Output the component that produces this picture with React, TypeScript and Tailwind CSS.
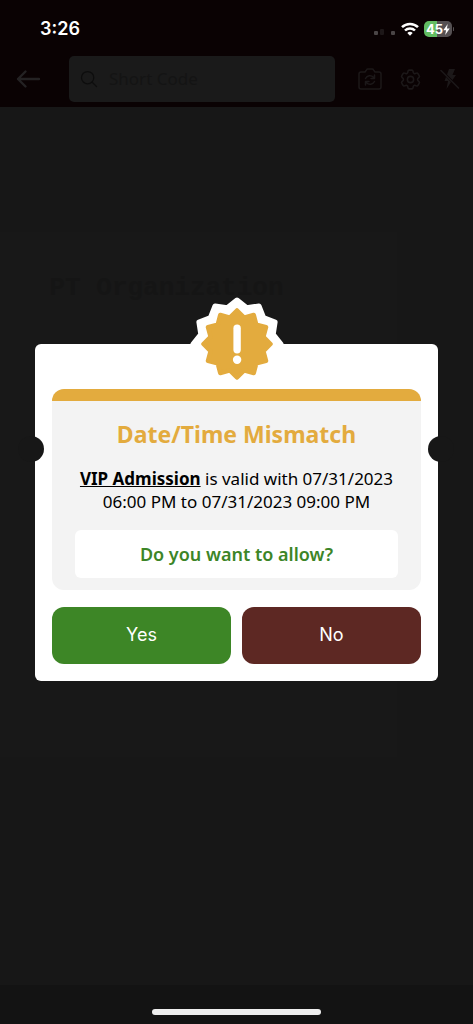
import React from "react";
import { IoSearchOutline } from "react-icons/io5";
import { HiOutlineCog6Tooth } from "react-icons/hi2";

function burstPoints(outer: number, inner: number, tips: number): string {
  const points: string[] = [];
  for (let i = 0; i < tips * 2; i++) {
    const radius = i % 2 === 0 ? outer : inner;
    const angle = (Math.PI * i) / tips;
    points.push(
      `${(50 + radius * Math.sin(angle)).toFixed(2)},${(50 - radius * Math.cos(angle)).toFixed(2)}`,
    );
  }
  return points.join(" ");
}

function WarningBadge() {
  return (
    <svg viewBox="0 0 100 100" className="size-[100px]" role="img" aria-label="Warning">
      <polygon points={burstPoints(44, 37.5, 12)} fill="#fff" stroke="#fff" strokeWidth="5" strokeLinejoin="round" />
      <polygon points={burstPoints(33.5, 27.3, 12)} fill="#e3ab3e" stroke="#e3ab3e" strokeWidth="4.5" strokeLinejoin="round" />
      <rect x="46.4" y="30.5" width="7.4" height="29" rx="3.7" fill="#fff" />
      <circle cx="50.1" cy="65.8" r="4.2" fill="#fff" />
    </svg>
  );
}

function StatusBar() {
  return (
    <div className="flex h-14 items-center justify-between pt-[2px] pr-[19px] pl-10 text-white">
      <time className="font-['Inter',sans-serif] text-lg leading-6 font-semibold">3:26</time>
      <div className="flex items-center gap-[5px]">
        <svg viewBox="0 0 22 14" className="h-[14px] w-[22px]" aria-hidden="true">
          <rect x="0" y="9" width="4" height="4" rx="1" fill="#4a4546" />
          <rect x="6" y="7" width="4" height="6" rx="1" fill="#1d1718" />
          <rect x="17" y="9" width="4" height="4" rx="1" fill="#4a4546" />
        </svg>
        <svg viewBox="0 0 18 14" className="h-[14px] w-[18px]" aria-hidden="true" fill="none" stroke="#fff" strokeWidth="2.5">
          <path d="M1 5.2a11.3 11.3 0 0 1 16 0" />
          <path d="M4 8.5a7 7 0 0 1 10 0" />
          <path d="M9 13.8 6.3 11a3.9 3.9 0 0 1 5.4 0Z" fill="#fff" stroke="none" />
        </svg>
        <div className="flex items-center gap-px">
          <div className="flex h-4 w-7 items-center justify-center overflow-hidden rounded-[5px] bg-linear-to-r from-[#62bd62] from-45% to-[#555052] to-45% font-['Inter',sans-serif] text-[13px] leading-4 font-bold">
            45
            <svg viewBox="0 0 7 12" className="h-[11px] w-[7px]" aria-hidden="true">
              <path d="M4.8 0 0 6.8h3L2.1 12 7 5H4Z" fill="#fff" />
            </svg>
          </div>
          <span className="h-1 w-px rounded-full bg-[#555052]" />
        </div>
      </div>
    </div>
  );
}

function CameraSwitchIcon() {
  return (
    <svg viewBox="0 0 24 22" className="h-[22px] w-6" fill="none" stroke="currentColor" strokeWidth="1.5" strokeLinecap="round" strokeLinejoin="round">
      <path d="M3 4h4l1.500-2.200Q8.900 1 9.800 1h4.400q.900 0 1.300.8L17 4h4q2 0 2 2v13q0 2-2 2H3q-2 0-2-2V6q0-2 2-2Z" />
      <path d="M7.500 10.500a5 5 0 0 1 8-1.200l1 1M16.500 7v3.400H13M16.500 13.500a5 5 0 0 1-8 1.200l-1-1M7.500 17v-3.400H11" />
    </svg>
  );
}

function FlashOffIcon() {
  return (
    <svg viewBox="0 0 22 22" className="size-[22px]" fill="currentColor">
      <path d="M10 1h6l-2.500 6H17l-3.500 5L8 6.500ZM7 9l5 5-4.500 7L9 13H5.500Z" />
      <path d="M2 2.500 19.500 20" fill="none" stroke="currentColor" strokeWidth="1.6" strokeLinecap="round" />
    </svg>
  );
}

function Header() {
  return (
    <header className="bg-[#0a0203]">
      <StatusBar />
      <div className="flex h-[51px] items-start pr-3 pl-4 text-[#242223]">
        <button type="button" aria-label="Back" className="flex h-[46px] w-[53px] items-center">
          <svg viewBox="0 0 26 20" className="h-5 w-[26px]" fill="none" stroke="currentColor" strokeWidth="2.4" strokeLinecap="round" strokeLinejoin="round">
            <path d="M23 10H2M9.500 2.500 2 10l7.500 7.500" />
          </svg>
        </button>
        <label className="flex h-[46px] min-w-0 flex-1 items-center gap-[10px] rounded-[5px] bg-[#1a1a1a] pl-[10px]">
          <IoSearchOutline className="size-5 shrink-0 text-[#0d0d0d]" />
          <input
            type="text"
            aria-label="Short Code"
            placeholder="Short Code"
            className="w-full min-w-0 bg-transparent font-['Noto_Sans',sans-serif] text-[17px] outline-none placeholder:text-[#141414]"
          />
        </label>
        <div className="flex h-[46px] items-center gap-4 pl-[23px] text-[#1c1819]">
          <button type="button" aria-label="Switch camera">
            <CameraSwitchIcon />
          </button>
          <button type="button" aria-label="Settings">
            <HiOutlineCog6Tooth className="size-[25px]" />
          </button>
          <button type="button" aria-label="Flash off">
            <FlashOffIcon />
          </button>
        </div>
      </div>
    </header>
  );
}

function MismatchDialog() {
  return (
    <section
      role="dialog"
      aria-modal="true"
      aria-labelledby="dialog-title"
      className="relative w-full rounded-md bg-white px-[17px] pt-[45px] pb-[17px]"
    >
      <div className="absolute inset-x-0 -top-[50px] flex justify-center">
        <WarningBadge />
      </div>
      <span className="absolute top-[92px] -left-[17px] size-[26px] rounded-full bg-[#171717]" />
      <span className="absolute top-[92px] -right-4 size-[26px] rounded-full bg-[#171717]" />

      <div className="relative overflow-hidden rounded-xl bg-[#f3f3f3] font-['Noto_Sans',sans-serif]">
        <div className="h-3 bg-[#e3ab3e]" />
        <div className="px-[23px] pt-[15px] pb-3 text-center">
          <h1 id="dialog-title" className="text-[23px] leading-9 font-bold text-[#e3ab3e]">
            Date/Time Mismatch
          </h1>
          <p className="mt-[15px] text-[17px] leading-[23px] text-black">
            <strong className="font-bold underline">VIP Admission</strong> is valid with 07/31/2023 06:00 PM to
            07/31/2023 09:00 PM
          </p>
          <p className="mt-[17px] rounded-md bg-white text-lg leading-[48px] font-semibold text-[#3c8527]">
            Do you want to allow?
          </p>
        </div>
      </div>

      <div className="mt-[17px] grid grid-cols-2 gap-[11px] font-['Inter',sans-serif] text-lg text-white">
        <button type="button" className="h-[57px] rounded-xl bg-[#3d8626]">
          Yes
        </button>
        <button type="button" className="h-[57px] rounded-xl bg-[#5d2823]">
          No
        </button>
      </div>
    </section>
  );
}

export default function App() {
  return (
    <div className="relative flex min-h-screen flex-col bg-[#171717]">
      <Header />
      <main className="flex-1 pt-[125px]">
        <div className="mr-[76px] h-[525px] bg-[#181818] pt-9 text-center">
          <p className="pr-16 font-['Liberation_Mono',monospace] text-[26px] leading-10 font-bold whitespace-nowrap text-[#151515]">
            PT Organization
          </p>
        </div>
      </main>
      <footer className="flex h-[39px] items-start justify-center bg-[#131313] pt-6">
        <div className="h-[6px] w-[169px] rounded-full bg-[#eeeeee]" />
      </footer>
      <div className="absolute inset-0 flex items-center px-[35px]">
        <MismatchDialog />
      </div>
    </div>
  );
}
